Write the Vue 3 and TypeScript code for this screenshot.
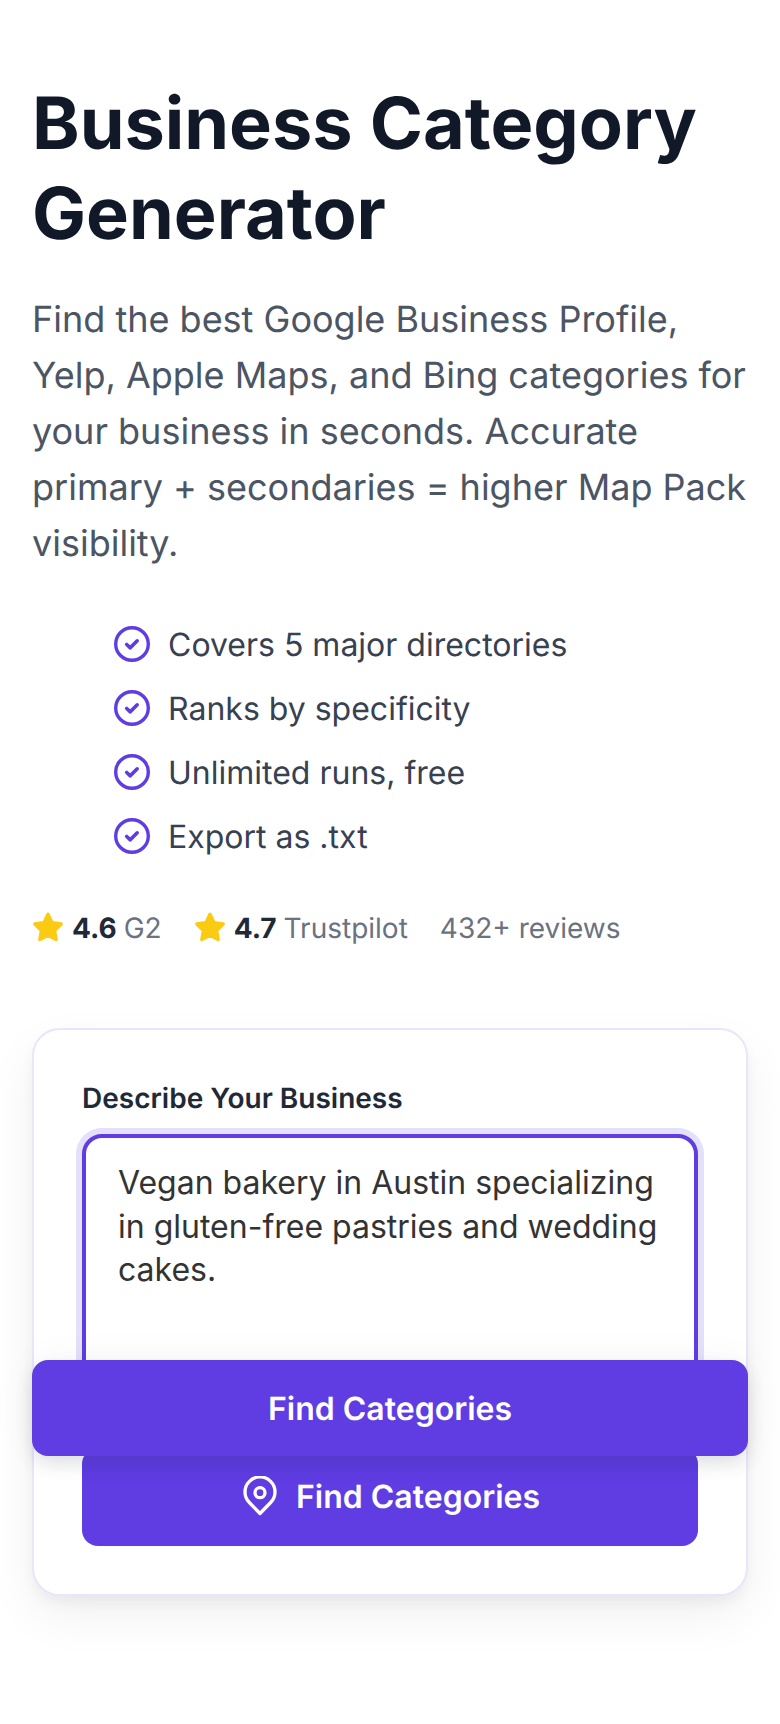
<script setup lang="ts">
const features: string[] = ['Covers 5 major directories', 'Ranks by specificity', 'Unlimited runs, free', 'Export as .txt']
const ratings = [
  { score: '4.6', name: 'G2' },
  { score: '4.7', name: 'Trustpilot' },
]
</script>

<template>
  <main class="page">
    <h1 class="title">Business Category Generator</h1>
    <p class="lead">Find the best Google Business Profile, Yelp, Apple Maps, and Bing categories for your business in seconds. Accurate primary + secondaries = higher Map Pack visibility.</p>
    <ul class="features">
      <li v-for="f in features" :key="f" class="feature">
        <svg class="check" viewBox="0 0 36 36" fill="none" stroke="#5f3de3" stroke-linecap="round" stroke-linejoin="round">
          <circle cx="18" cy="18" r="16.300" stroke-width="3.400" />
          <path d="M12.700 18.500l3.600 3.300 6.900-7" stroke-width="3.600" />
        </svg>
        <span>{{ f }}</span>
      </li>
    </ul>
    <div class="ratings">
      <span v-for="r in ratings" :key="r.name" class="rating">
        <svg class="star" viewBox="0.8 1 22.400 22.400"><path fill="#fbcb14" stroke="#fbcb14" stroke-width="2.400" stroke-linejoin="round" d="M12 2.600l2.800 5.900 6.400.9-4.600 4.500 1.100 6.400L12 17.300l-5.700 3 1.100-6.400-4.600-4.500 6.400-.9z" /></svg>
        <b>{{ r.score }}</b>
        <span class="rname">{{ r.name }}</span>
      </span>
      <span class="reviews">432+ reviews</span>
    </div>
    <section class="card">
      <label class="label" for="desc">Describe Your Business</label>
      <textarea id="desc" class="input" readonly>Vegan bakery in Austin specializing in gluten-free pastries and wedding cakes.</textarea>
      <button class="btn inner" type="button">
        <svg class="pin" viewBox="0 0 24 24" fill="none" stroke="#fff" stroke-width="2" stroke-linejoin="round">
          <path d="M12 22.500 5.600 15.900a9 9 0 1 1 12.800 0z" />
          <circle cx="12" cy="10" r="3" />
        </svg>
        Find Categories
      </button>
    </section>
    <button class="btn sticky" type="button">Find Categories</button>
  </main>
</template>

<style>
body { background: #fff; }
</style>

<style scoped>
.page {
  position: relative;
  box-sizing: border-box;
  width: 780px;
  height: 1724px;
  padding: 79px 32px 0;
  font-family: Inter, "Liberation Sans", sans-serif;
  text-rendering: geometricPrecision;
  overflow: hidden;
}
.title {
  margin: 0;
  font-size: 72px;
  line-height: 90px;
  font-weight: 700;
  color: #111827;
}
.lead {
  margin: 32px 0 0;
  font-size: 36px;
  line-height: 56px;
  color: #4b5563;
}
.features {
  list-style: none;
  margin: 41px 0 0;
  padding: 0 0 0 82px;
}
.feature {
  display: flex;
  align-items: center;
  gap: 18px;
  height: 64px;
  font-size: 32px;
  color: #374151;
}
.check { width: 36px; height: 36px; flex: none; }
.ratings {
  display: flex;
  align-items: center;
  gap: 32px;
  margin-top: 43px;
  font-size: 28px;
  color: #6b7280;
}
.rating { display: flex; align-items: center; gap: 8px; }
.rating b { color: #1f2937; font-weight: 700; margin-right: -1px; }
.star { width: 32px; height: 32px; }
.card {
  box-sizing: border-box;
  height: 568px;
  margin-top: 83px;
  padding: 48px;
  background: #fff;
  border: 2px solid #e9e5fb;
  border-radius: 28px;
  box-shadow: 0 8px 16px -4px rgba(17, 24, 39, 0.07), 0 20px 50px rgba(17, 24, 39, 0.06);
}
.label {
  display: block;
  font-size: 28px;
  line-height: 40px;
  font-weight: 600;
  color: #1f2937;
  margin-bottom: 16px;
}
.input {
  display: block;
  box-sizing: border-box;
  width: 100%;
  height: 290px;
  padding: 23px 32px;
  border: 4px solid #5f3de3;
  border-radius: 20px;
  box-shadow: 0 0 0 6px #e5e0fa;
  font: 32px/43.500px Inter, "Liberation Sans", sans-serif;
  color: #333;
  resize: none;
  outline: none;
  overflow: hidden;
}
.btn {
  display: flex;
  align-items: center;
  justify-content: center;
  gap: 16px;
  border: 0;
  background: #5f3de3;
  color: #fff;
  font: 600 32px Inter, "Liberation Sans", sans-serif;
  text-rendering: geometricPrecision;
  border-radius: 16px;
}
.inner { width: 100%; height: 98px; margin-top: 24px; padding: 0 0 2px; }
.pin { width: 40px; height: 40px; }
.sticky {
  position: absolute;
  left: 32px;
  top: 1360px;
  width: 716px;
  height: 96px;
  padding: 0;
  box-shadow: 0 8px 20px -2px rgba(17, 24, 39, 0.13), 0 0 40px rgba(17, 24, 39, 0.04);
}
</style>
